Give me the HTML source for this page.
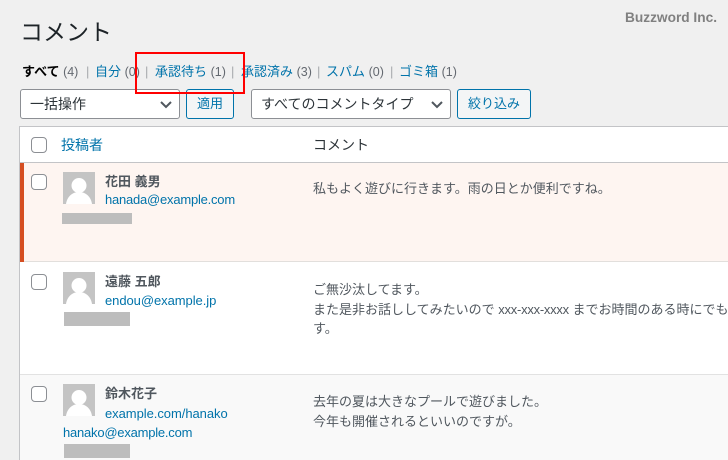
<!DOCTYPE html>
<html lang="ja">
<head>
<meta charset="utf-8">
<style>
html,body{margin:0;padding:0;}
body{width:728px;height:460px;overflow:hidden;position:relative;background:#f0f0f0;font-family:"Liberation Sans","Noto Sans CJK JP",sans-serif;font-size:13px;color:#50575e;}
.a{position:absolute;white-space:nowrap;line-height:18px;}
.l{color:#0073aa;}
.g{color:#646970;font-size:12.5px;}
.s{color:#a7aaad;}
.box{position:absolute;box-sizing:border-box;}
.sel{background:#fff;border:1px solid #8c8f94;border-radius:3px;height:30px;top:89px;font-size:14px;line-height:28px;padding-left:9px;color:#2c3338;white-space:nowrap;overflow:hidden;}
.btn{background:#f3f5f6;border:1px solid #0073aa;border-radius:3px;height:30px;top:89px;font-size:13px;line-height:28px;text-align:center;color:#0073aa;white-space:nowrap;}
.cb{position:absolute;box-sizing:border-box;width:16px;height:16px;background:#fff;border:1px solid #8c8f94;border-radius:4px;left:31px;}
.gr{position:absolute;background:#bdbdbd;}
.n{font-weight:bold;color:#50575e;font-size:13px;}
</style>
</head>
<body>
<div class="a" style="left:20px;top:16px;font-size:23px;line-height:32px;color:#1d2327;">コメント</div>
<div class="a" style="left:625px;top:9px;font-size:13.7px;font-weight:bold;color:#808080;line-height:18px;">Buzzword Inc.</div>

<div class="a g" style="left:22px;top:63px;"><b style="color:#000;font-size:13px;">すべて</b> <span>(4)</span></div>
<div class="a s" style="left:86px;top:63px;">|</div>
<div class="a l" style="left:95px;top:63px;">自分 <span class="g">(0)</span></div>
<div class="a s" style="left:145px;top:63px;">|</div>
<div class="a l" style="left:155px;top:63px;">承認待ち <span class="g">(1)</span></div>
<div class="a s" style="left:231px;top:63px;">|</div>
<div class="a l" style="left:241px;top:63px;">承認済み <span class="g">(3)</span></div>
<div class="a s" style="left:317px;top:63px;">|</div>
<div class="a l" style="left:326px;top:63px;">スパム <span class="g">(0)</span></div>
<div class="a s" style="left:390px;top:63px;">|</div>
<div class="a l" style="left:399px;top:63px;">ゴミ箱 <span class="g">(1)</span></div>

<div class="box sel" style="left:20px;width:160px;">一括操作</div>
<svg class="box" style="left:159px;top:100px;" width="14" height="10" viewBox="0 0 14 10"><path d="M2 2 L7 7 L12 2" fill="none" stroke="#50575e" stroke-width="2"/></svg>
<div class="box btn" style="left:186px;width:48px;">適用</div>
<div class="box sel" style="left:251px;width:200px;">すべてのコメントタイプ</div>
<svg class="box" style="left:430px;top:100px;" width="14" height="10" viewBox="0 0 14 10"><path d="M2 2 L7 7 L12 2" fill="none" stroke="#50575e" stroke-width="2"/></svg>
<div class="box btn" style="left:457px;width:74px;">絞り込み</div>

<!-- table -->
<div class="box" style="left:19px;top:126px;width:709px;height:334px;background:#fff;border:1px solid #c3c4c7;border-right:0;border-bottom:0;"></div>
<div class="box" style="left:20px;top:162px;width:708px;height:1px;background:#c3c4c7;"></div>
<div class="cb" style="top:137px;"></div>
<div class="a l" style="left:61px;top:136px;font-size:14px;">投稿者</div>
<div class="a" style="left:313px;top:136px;font-size:14px;color:#2c3338;">コメント</div>

<!-- row 1 -->
<div class="box" style="left:20px;top:163px;width:708px;height:99px;background:#fef5f1;border-bottom:1px solid #e2dfdc;"></div>
<div class="box" style="left:20px;top:163px;width:4px;height:99px;background:#d54e21;"></div>
<div class="cb" style="top:174px;"></div>
<svg class="box" style="left:63px;top:172px;" width="32" height="32" viewBox="0 0 32 32"><rect width="32" height="32" fill="#c4c4c4"/><circle cx="16" cy="13.5" r="7.5" fill="#fff"/><path d="M3 32 C4 25 9 20 16 20 C23 20 28 25 29 32Z" fill="#fff"/></svg>
<div class="a n" style="left:105px;top:173px;">花田 義男</div>
<div class="a l" style="left:105px;top:191px;letter-spacing:-.22px;">hanada@example.com</div>
<div class="gr" style="left:62px;top:213px;width:70px;height:11px;"></div>
<div class="a" style="left:313px;top:180px;">私もよく遊びに行きます。雨の日とか便利ですね。</div>

<!-- row 2 -->
<div class="box" style="left:20px;top:262px;width:708px;height:113px;background:#fff;border-bottom:1px solid #e2e2e2;"></div>
<div class="cb" style="top:274px;"></div>
<svg class="box" style="left:63px;top:272px;" width="32" height="32" viewBox="0 0 32 32"><rect width="32" height="32" fill="#c4c4c4"/><circle cx="16" cy="13.5" r="7.5" fill="#fff"/><path d="M3 32 C4 25 9 20 16 20 C23 20 28 25 29 32Z" fill="#fff"/></svg>
<div class="a n" style="left:105px;top:273px;">遠藤 五郎</div>
<div class="a l" style="left:105px;top:292px;letter-spacing:-.06px;">endou@example.jp</div>
<div class="gr" style="left:64px;top:312px;width:66px;height:14px;"></div>
<div class="box" style="left:313px;top:280px;width:415px;height:60px;overflow:hidden;line-height:19.5px;white-space:nowrap;">ご無沙汰してます。<br>また是非お話ししてみたいので <span style="letter-spacing:-.25px;">xxx-xxx-xxxx</span> までお時間のある時にでも<br>す。</div>

<!-- row 3 -->
<div class="box" style="left:20px;top:375px;width:708px;height:85px;background:#f9f9f9;"></div>
<div class="cb" style="top:386px;"></div>
<svg class="box" style="left:63px;top:384px;" width="32" height="32" viewBox="0 0 32 32"><rect width="32" height="32" fill="#c4c4c4"/><circle cx="16" cy="13.5" r="7.5" fill="#fff"/><path d="M3 32 C4 25 9 20 16 20 C23 20 28 25 29 32Z" fill="#fff"/></svg>
<div class="a n" style="left:105px;top:385px;">鈴木花子</div>
<div class="a l" style="left:105px;top:405px;letter-spacing:-.05px;">example.com/hanako</div>
<div class="a l" style="left:63px;top:424px;letter-spacing:-.22px;">hanako@example.com</div>
<div class="gr" style="left:64px;top:444px;width:66px;height:14px;"></div>
<div class="a" style="left:313px;top:392px;line-height:19.5px;">去年の夏は大きなプールで遊びました。<br>今年も開催されるといいのですが。</div>

<!-- red highlight -->
<div class="box" style="left:135px;top:52px;width:110px;height:42px;border:2px solid #f00;"></div>
</body>
</html>
